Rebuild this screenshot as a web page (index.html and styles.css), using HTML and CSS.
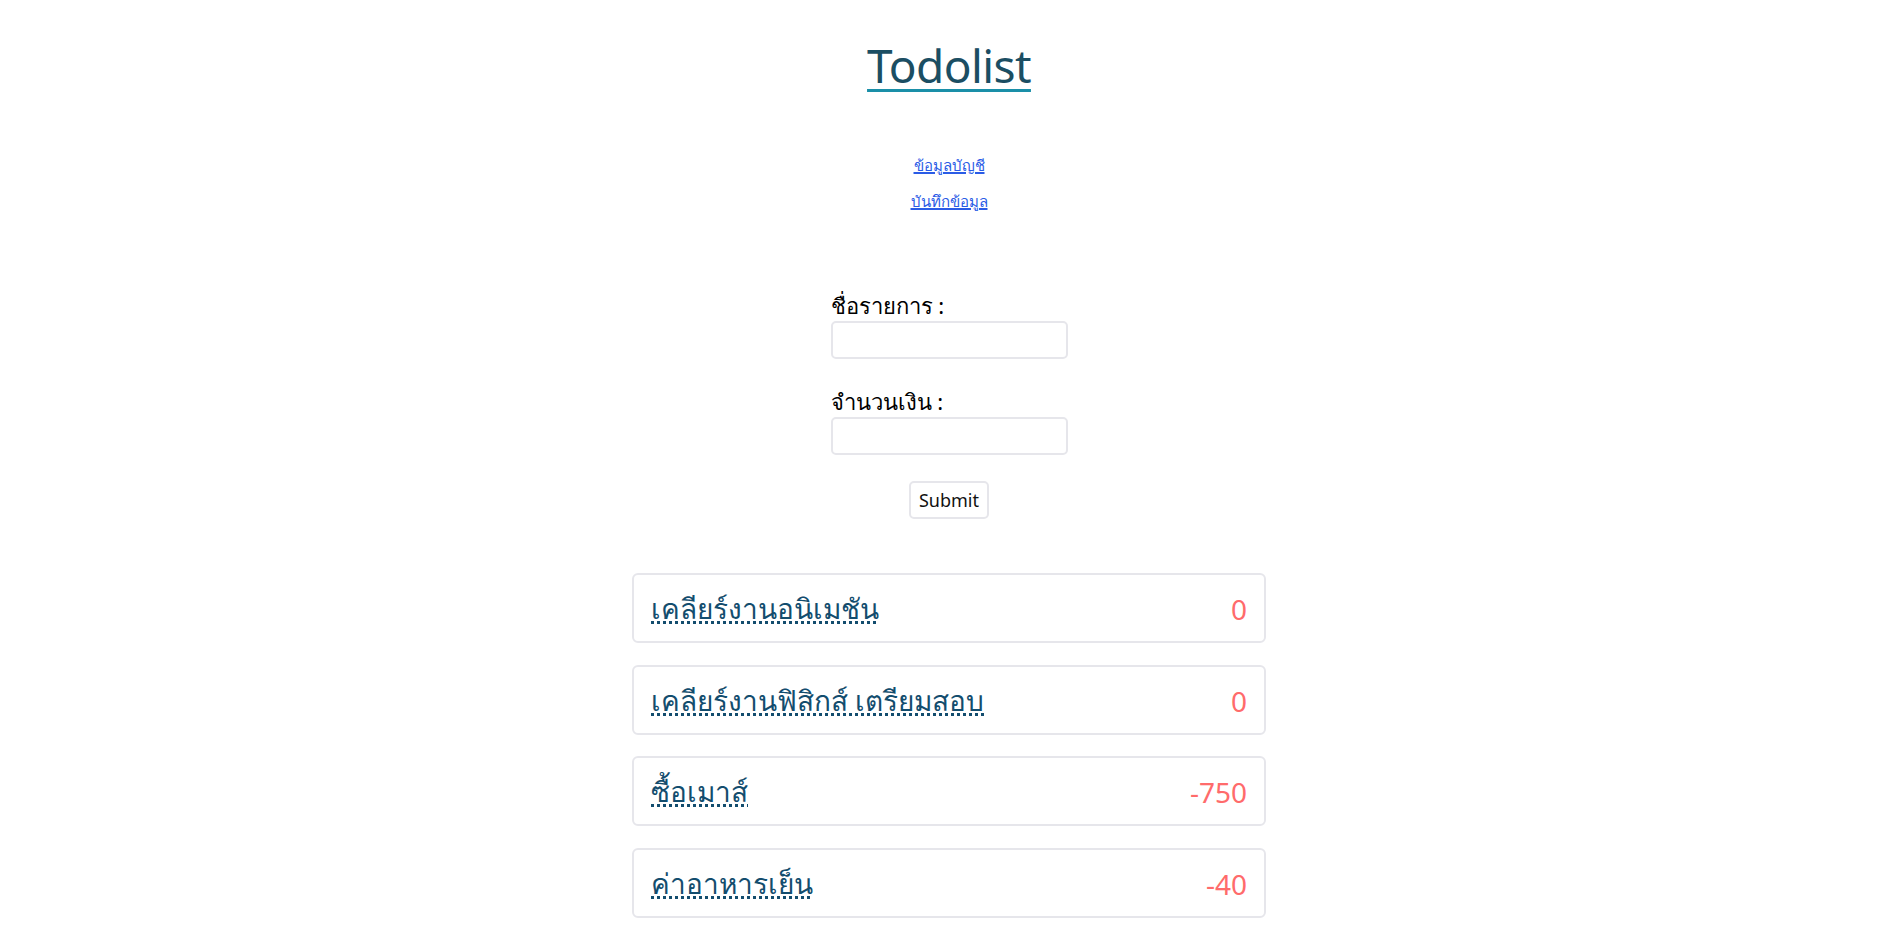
FILE: index.html
```html
<!DOCTYPE html>
<html lang="th">
<head>
<meta charset="utf-8">
<title>Todolist</title>
<link rel="stylesheet" href="styles.css">
</head>
<body>
<header class="header">
  <h1 class="title">Todolist</h1>
  <nav class="nav">
    <a class="nav-link" href="#">ข้อมูลบัญชี</a>
    <a class="nav-link" href="#">บันทึกข้อมูล</a>
  </nav>
</header>
<main class="main">
  <form class="form">
    <div class="field">
      <label class="label" for="name">ชื่อรายการ :</label>
      <input class="input" id="name" type="text">
    </div>
    <div class="field">
      <label class="label" for="amount">จำนวนเงิน :</label>
      <input class="input" id="amount" type="text">
    </div>
    <div class="actions">
      <button class="button" type="button">Submit</button>
    </div>
  </form>
  <ul class="list">
    <li class="item"><abbr class="item-name" title="เคลียร์งานอนิเมชัน">เคลียร์งานอนิเมชัน</abbr><span class="item-value">0</span></li>
    <li class="item"><abbr class="item-name" title="เคลียร์งานฟิสิกส์ เตรียมสอบ">เคลียร์งานฟิสิกส์ เตรียมสอบ</abbr><span class="item-value">0</span></li>
    <li class="item"><abbr class="item-name" title="ซื้อเมาส์">ซื้อเมาส์</abbr><span class="item-value">-750</span></li>
    <li class="item"><abbr class="item-name" title="ค่าอาหารเย็น">ค่าอาหารเย็น</abbr><span class="item-value">-40</span></li>
  </ul>
</main>
</body>
</html>
```
FILE: styles.css
```css
html, body {
  margin: 0;
  padding: 0;
  background: #ffffff;
}
body {
  padding-left: 3px;
  font-family: "Noto Sans", "Open Sans", sans-serif;
  color: #000;
  text-align: center;
}
.header {
  padding-top: 36px;
}
.title {
  margin: 0;
  font-size: 46px;
  font-weight: 400;
  line-height: 58px;
  letter-spacing: -0.6px;
  color: #1b4e63;
  text-decoration: underline;
  text-decoration-color: #1a8fa8;
  text-decoration-thickness: 3px;
  text-underline-offset: 6px;
}
.nav {
  display: flex;
  flex-direction: column;
  align-items: center;
  gap: 16px;
  margin-top: 61px;
}
.nav-link {
  font-size: 15px;
  line-height: 20px;
  color: #2b5ce6;
  text-decoration: underline;
  text-decoration-thickness: 2px;
}
.main {
  display: flex;
  flex-direction: column;
  align-items: center;
  margin-top: 79px;
}
.form {
  width: 237px;
  display: flex;
  flex-direction: column;
  gap: 27px;
}
.field {
  display: flex;
  flex-direction: column;
  align-items: flex-start;
}
.label {
  font-size: 22px;
  line-height: 30px;
}
.input {
  box-sizing: border-box;
  width: 237px;
  height: 38px;
  margin: 1px 0 0;
  border: 2px solid #e6e6eb;
  border-radius: 5px;
  padding: 4px 8px;
  font: inherit;
  font-size: 16px;
  outline: none;
}
.actions {
  display: flex;
  justify-content: center;
  margin-top: -1px;
}
.button {
  box-sizing: border-box;
  height: 38px;
  padding: 0 8px;
  background: #fff;
  border: 2px solid #e6e6eb;
  border-radius: 5px;
  font: inherit;
  font-size: 18px;
  color: #111;
}
.list {
  list-style: none;
  margin: 54px 0 0;
  padding: 0;
  width: 634px;
  display: flex;
  flex-direction: column;
  gap: 21.7px;
}
.item {
  box-sizing: border-box;
  height: 70px;
  display: flex;
  justify-content: space-between;
  align-items: center;
  padding: 2px 17px 0 17px;
  border: 2px solid #e6e6eb;
  border-radius: 6px;
}
.item-name {
  font-size: 28px;
  color: #134d6e;
  text-decoration: underline dotted;
  text-decoration-thickness: 3px;
}
.item-value {
  font-size: 28px;
  color: #ff6b6b;
}
```
